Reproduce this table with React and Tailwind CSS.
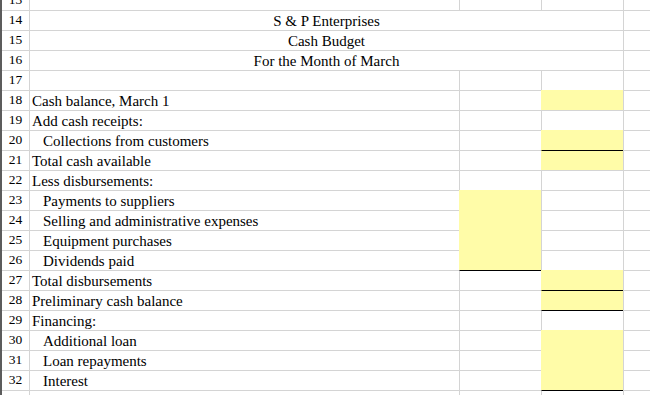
const YELLOW = 'bg-[#fffca8]';

const rows = [
  { n: 13 },
  { n: 14, title: 'S & P Enterprises' },
  { n: 15, title: 'Cash Budget' },
  { n: 16, title: 'For the Month of March' },
  { n: 17 },
  { n: 18, label: 'Cash balance, March 1', d: 'y' },
  { n: 19, label: 'Add cash receipts:' },
  { n: 20, label: 'Collections from customers', indent: true, d: 'y' },
  { n: 21, label: 'Total cash available', d: 'yb' },
  { n: 22, label: 'Less disbursements:' },
  { n: 23, label: 'Payments to suppliers', indent: true, c: 'y' },
  { n: 24, label: 'Selling and administrative expenses', indent: true, c: 'y' },
  { n: 25, label: 'Equipment purchases', indent: true, c: 'y' },
  { n: 26, label: 'Dividends paid', indent: true, c: 'y' },
  { n: 27, label: 'Total disbursements', c: 'b', d: 'y' },
  { n: 28, label: 'Preliminary cash balance', d: 'yb' },
  { n: 29, label: 'Financing:', d: 'b' },
  { n: 30, label: 'Additional loan', indent: true, d: 'y' },
  { n: 31, label: 'Loan repayments', indent: true, d: 'y' },
  { n: 32, label: 'Interest', indent: true, d: 'y' },
  { n: 33, d: 'b' },
];

// y = yellow fill, b = black top rule, yb = both
function cellClass(kind) {
  if (kind === 'y') return `${YELLOW} border-t-[#fffca8] border-l-[#fffca8]`;
  if (kind === 'yb') return `${YELLOW} border-t-black border-l-[#fffca8]`;
  if (kind === 'b') return 'bg-white border-t-black border-l-[#d4d4d4]';
  return 'bg-white border-t-[#d4d4d4] border-l-[#d4d4d4]';
}

function Row({ row }) {
  return (
    <div className="flex h-[20px]">
      <div className="w-[27px] shrink-0 border-t border-[#d4d4d4] text-center text-[13.5px] leading-[18px] text-black">
        {row.n === 33 ? '' : row.n}
      </div>
      {row.title !== undefined ? (
        <div className="w-[594px] shrink-0 border-t border-l border-[#d4d4d4] text-center text-[15px] leading-[20px] text-black">
          {row.title}
        </div>
      ) : (
        <>
          <div
            className={`w-[430px] shrink-0 border-t border-l border-[#d4d4d4] text-[15px] leading-[20px] text-black whitespace-nowrap ${
              row.indent ? 'pl-[13px]' : 'pl-[2px]'
            }`}
          >
            {row.label}
          </div>
          <div className={`w-[82px] shrink-0 border-t border-l ${cellClass(row.c)}`} />
          <div className={`w-[82px] shrink-0 border-t border-l ${cellClass(row.d)}`} />
        </>
      )}
      <div className="flex-1 border-t border-l border-[#d4d4d4]" />
    </div>
  );
}

export default function App() {
  return (
    <div
      className="w-[650px] h-[395px] overflow-hidden bg-white border-l-2 border-[#5c5c5c]"
      style={{ fontFamily: '"Liberation Serif", "Times New Roman", serif' }}
    >
      <div className="-mt-[10px]">
        {rows.map((row) => (
          <Row key={row.n} row={row} />
        ))}
      </div>
    </div>
  );
}
